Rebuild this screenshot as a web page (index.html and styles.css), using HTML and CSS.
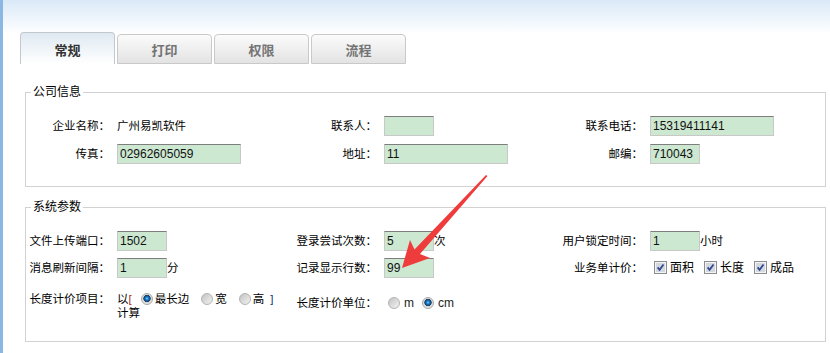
FILE: index.html
```html
<!DOCTYPE html>
<html lang="zh-CN">
<head>
    <meta charset="UTF-8">
    <meta name="viewport" content="width=device-width, initial-scale=1.0">
    <title>系统设置</title>
    <link rel="stylesheet" href="styles.css">
</head>
<body>
    <!-- Tabs -->
    <div class="tabs">
        <div class="tab active">常规</div>
        <div class="tab">打印</div>
        <div class="tab">权限</div>
        <div class="tab">流程</div>
    </div>

    <!-- Company info -->
    <fieldset class="group group-company">
        <legend>公司信息</legend>
        <div class="form-grid company-grid">
            <label class="lbl">企业名称：</label>
            <div class="val">广州易凯软件</div>
            <label class="lbl">联系人：</label>
            <div class="val"><input class="txt short" type="text" value=""></div>
            <label class="lbl">联系电话：</label>
            <div class="val"><input class="txt" type="text" value="15319411141"></div>

            <label class="lbl">传真：</label>
            <div class="val"><input class="txt" type="text" value="02962605059"></div>
            <label class="lbl">地址：</label>
            <div class="val"><input class="txt" type="text" value="11"></div>
            <label class="lbl">邮编：</label>
            <div class="val"><input class="txt short" type="text" value="710043"></div>
        </div>
    </fieldset>

    <!-- System params -->
    <fieldset class="group group-sys">
        <legend>系统参数</legend>
        <div class="form-grid sys-grid">
            <label class="lbl">文件上传端口：</label>
            <div class="val"><input class="txt short" type="text" value="1502"></div>
            <label class="lbl">登录尝试次数：</label>
            <div class="val"><input class="txt short" type="text" value="5">次</div>
            <label class="lbl">用户锁定时间：</label>
            <div class="val"><input class="txt short" type="text" value="1">小时</div>

            <label class="lbl">消息刷新间隔：</label>
            <div class="val"><input class="txt short" type="text" value="1">分</div>
            <label class="lbl">记录显示行数：</label>
            <div class="val"><input class="txt short" type="text" value="99"></div>
            <label class="lbl">业务单计价：</label>
            <div class="val">
                <svg class="chk first" viewBox="0 0 13 13"><rect x=".5" y=".5" width="12" height="12" fill="#f4f4f4" stroke="#8c8d8e"/><rect x="2" y="2" width="9" height="9" fill="#d2d7e0"/><path d="M3.6 6.4l2 2.4 3.9-5.3" fill="none" stroke="#33488c" stroke-width="1.8"/></svg><span class="opt">面积</span>
                <svg class="chk" viewBox="0 0 13 13"><rect x=".5" y=".5" width="12" height="12" fill="#f4f4f4" stroke="#8c8d8e"/><rect x="2" y="2" width="9" height="9" fill="#d2d7e0"/><path d="M3.6 6.4l2 2.4 3.9-5.3" fill="none" stroke="#33488c" stroke-width="1.8"/></svg><span class="opt">长度</span>
                <svg class="chk" viewBox="0 0 13 13"><rect x=".5" y=".5" width="12" height="12" fill="#f4f4f4" stroke="#8c8d8e"/><rect x="2" y="2" width="9" height="9" fill="#d2d7e0"/><path d="M3.6 6.4l2 2.4 3.9-5.3" fill="none" stroke="#33488c" stroke-width="1.8"/></svg><span class="opt">成品</span>
            </div>

            <label class="lbl row3">长度计价项目：</label>
            <div class="val-block row3">以<span class="br-l">[</span><span class="radio on first"></span>最长边<span class="radio"></span>宽<span class="radio"></span>高<span class="br-r">]</span><br>计算</div>
            <label class="lbl row3-mid">长度计价单位：</label>
            <div class="val row3-mid">
                <span class="radio first"></span><span class="unit">m</span>
                <span class="radio on"></span><span class="unit">cm</span>
            </div>
            <div></div>
            <div></div>
        </div>
    </fieldset>

    <!-- Red arrow annotation -->
    <svg class="arrow" viewBox="0 0 830 353" width="830" height="353">
        <polygon points="402,268 430,258 420,254 487.5,176 486,175 414.5,249.5 410,240" fill="#ee3b3b"/>
    </svg>
</body>
</html>
```

FILE: styles.css
```css
html {
    background: #fff;
}

body {
    margin: 0;
    min-height: 100vh;
    box-sizing: border-box;
    border-left: 3px solid #8ab8e3;
    background: #fff linear-gradient(#dae9f7, #fff 34px) no-repeat;
    font-family: "Liberation Sans", "Noto Sans CJK SC", sans-serif;
    font-size: 11.5px;
    color: #000;
    position: relative;
    overflow: hidden;
}

/* Tabs */
.tabs {
    display: flex;
    align-items: flex-end;
    gap: 2px;
    height: 32px;
    padding: 32px 0 0 17px;
}

.tab {
    width: 95px;
    height: 30px;
    box-sizing: border-box;
    border: 1px solid #c9c9c9;
    border-radius: 4px 4px 0 0;
    background: linear-gradient(#fbfbfb, #e3e3e3);
    display: flex;
    align-items: center;
    justify-content: center;
    font-family: "Noto Sans CJK SC", sans-serif;
    font-size: 13px;
    font-weight: bold;
    color: #747474;
}

.tab.active {
    height: 32px;
    padding-top: 1px;
    border-color: #c4c8cc;
    border-bottom: none;
    background: linear-gradient(#dfe9f2, #fff);
    color: #333;
}

/* Field groups */
.group {
    margin: 20px 4px 0 22px;
    padding: 12px 0 18px;
    border: 1px solid #d2d2d2;
    min-width: 0;
}

.group legend {
    margin-left: 5px;
    padding: 0 2px;
    font-size: 12px;
    line-height: 16px;
}

.group-sys {
    margin-top: 12px;
    padding-bottom: 21px;
}

.form-grid {
    display: grid;
    grid-template-columns: 91px 176px 91px 175px 91px 1fr;
    align-items: center;
}

.company-grid {
    grid-template-rows: 28px 28px;
}

.sys-grid {
    grid-template-rows: 27px 27px auto;
}

.lbl {
    text-align: right;
    padding-right: 7px;
    white-space: nowrap;
    line-height: 14px;
}

.val {
    display: flex;
    align-items: center;
    white-space: nowrap;
    line-height: 14px;
}

.val-block {
    line-height: 14px;
    white-space: nowrap;
}

.row3 {
    align-self: start;
    padding-top: 11px;
}

.row3-mid {
    align-self: start;
    padding-top: 15px;
}

/* Text inputs */
.txt {
    box-sizing: border-box;
    width: 124px;
    height: 20px;
    margin: 0;
    padding: 0 2px;
    border: 1px solid #c8c8c8;
    border-top-color: #7e7e7e;
    background: #cde8d1;
    font: 12px "Liberation Sans", sans-serif;
    color: #111;
    outline: none;
}

.txt.short {
    width: 50px;
}

/* Radios */
.radio {
    display: inline-block;
    width: 12px;
    height: 12px;
    box-sizing: border-box;
    margin: 0 2px 0 12px;
    border: 1px solid #b3b3b3;
    border-radius: 50%;
    background: linear-gradient(135deg, #c2c2c2, #f4f4f4);
    vertical-align: -2px;
}

.radio.on {
    border-color: #a8a8a8;
    background: radial-gradient(circle at 50% 45%, #8fd6ff 0, #1a7fcc 1.4px, #0c4f8e 2.8px, #2c3e55 3.4px, #d4d4d4 3.9px, #eeeeee 6px);
}

.val-block .radio.first {
    margin-left: 9px;
}

.br-l {
    color: #b4262a;
}

.br-r {
    margin-left: 6px;
    color: #22307a;
}

.val .radio {
    margin: 0 4px 0 8px;
}

.val .radio.first {
    margin-left: 4px;
}

.unit {
    font-size: 12px;
    color: #1e1e1e;
}

/* Checkboxes */
.chk {
    width: 13px;
    height: 13px;
    margin: 0 3px 0 10px;
    flex: none;
}

.chk.first {
    margin-left: 4px;
}

.opt {
    font-size: 12px;
}

/* Annotation arrow */
.arrow {
    position: absolute;
    top: 0;
    left: -3px;
    pointer-events: none;
}
```
